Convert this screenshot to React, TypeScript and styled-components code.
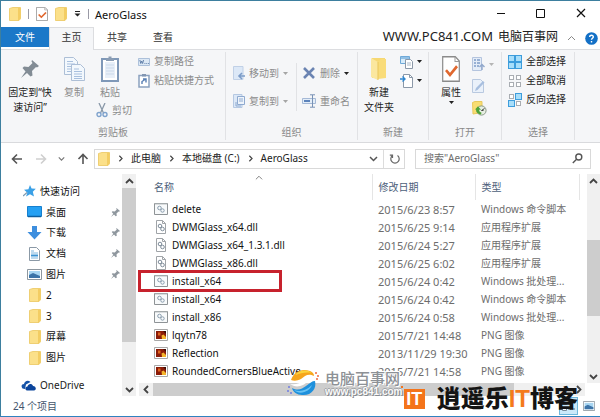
import React from "react";
import styled, { createGlobalStyle } from "styled-components";

const GlobalStyle = createGlobalStyle`
  *, *::before, *::after { box-sizing: border-box; }
  html, body { margin: 0; padding: 0; }
  body, button, input, table {
    font-family: "Noto Sans", "Noto Sans CJK SC", sans-serif;
    font-size: 10px;
    line-height: 15px;
  }
  button { margin: 0; padding: 0; border: 0; background: none; color: inherit; }
  svg { display: block; flex: none; }
`;

/* ---------- layout ---------- */

const Window = styled.div`
  position: relative;
  display: flex;
  flex-direction: column;
  min-height: 100vh;
  overflow: hidden;
  background: #fff;
  color: #222;
  border: solid #3d7f9f;
  border-width: 1px 0 1px 1px;
  border-bottom-color: #2f82c0;
  white-space: nowrap;
`;

const TitleBar = styled.header`
  display: flex;
  align-items: center;
  height: 26px;
  padding: 0 14px 0 8px;
`;

const QuickAccess = styled.div`
  display: flex;
  align-items: center;
  gap: 7px;
`;

const Divider = styled.span`
  width: 1px;
  height: 10px;
  background: #9a9aa6;
`;

const Title = styled.h1`
  margin: 0 0 0 6px;
  font-size: 11px;
  font-weight: 400;
  color: #111;
`;

const WindowControls = styled.div`
  display: flex;
  gap: 30px;
  margin-left: auto;
  padding-bottom: 2px;
`;

const IconButton = styled.button`
  display: flex;
  align-items: center;
  justify-content: center;
  gap: 4px;
`;

const TabBar = styled.nav`
  display: flex;
  align-items: stretch;
  height: 23px;
  border-bottom: 1px solid #dcdde0;
`;

const Tab = styled.button<{ $kind?: "file" | "active" }>`
  width: ${(p) => (p.$kind === "file" ? 48 : p.$kind === "active" ? 45 : 46)}px;
  height: ${(p) => (p.$kind === "file" ? 20 : 23)}px;
  padding-bottom: ${(p) => (p.$kind === "file" ? 0 : 3)}px;
  color: ${(p) => (p.$kind === "file" ? "#fff" : "#333")};
  background: ${(p) => (p.$kind === "file" ? "#1b78c8" : p.$kind === "active" ? "#f5f6f8" : "transparent")};
  border: ${(p) => (p.$kind === "active" ? "1px solid #dcdde0" : "0")};
  border-bottom: 0;
`;

const SiteMark = styled.div`
  display: flex;
  align-items: center;
  gap: 5px;
  margin: 0 9px 4px auto;
  font-size: 12px;
  color: #222;
`;

const SiteUrl = styled.span`
  font-size: 13px;
`;

const HelpTools = styled.div`
  display: flex;
  align-items: center;
  gap: 9px;
  padding-right: 2px;
`;

const Ribbon = styled.section`
  display: flex;
  height: 93px;
  padding: 2px 0 2px;
  background: #f5f6f8;
  border-bottom: 1px solid #d9dadd;
`;

const Group = styled.div<{ $width: number; $pad: number }>`
  display: flex;
  flex-direction: column;
  flex: 0 0 ${(p) => p.$width}px;
  padding-left: ${(p) => p.$pad}px;
  border-right: 1px solid #e1e2e5;
`;

const GroupBody = styled.div`
  display: flex;
  flex: 1;
`;

const GroupLabel = styled.div<{ $pad: number }>`
  height: 15px;
  margin-left: -${(p) => p.$pad}px;
  text-align: center;
  color: #8a8a8a;
`;

const BigButton = styled.button<{ $width: number; $off?: boolean }>`
  display: flex;
  flex-direction: column;
  align-items: center;
  align-self: flex-start;
  flex: none;
  gap: 3px;
  width: ${(p) => p.$width}px;
  padding-top: 4px;
  color: ${(p) => (p.$off ? "#8c8c8c" : "#222")};

  svg:first-child { height: 26px; }
  svg:not(:first-child) { margin-top: -2px; }
`;

const Column = styled.div<{ $width?: number; $top?: number }>`
  display: flex;
  flex-direction: column;
  flex: none;
  width: ${(p) => (p.$width ? p.$width + "px" : "auto")};
  padding-top: ${(p) => p.$top ?? 0}px;
`;

const SmallButton = styled.button<{ $height: number; $off?: boolean }>`
  display: flex;
  align-items: center;
  gap: 4px;
  height: ${(p) => p.$height}px;
  color: ${(p) => (p.$off ? "#8c8c8c" : "#222")};
`;

const InnerRule = styled.span`
  width: 1px;
  height: 48px;
  margin: 11px 5px 0 8px;
  background: #e1e2e5;
`;

const NavRow = styled.div`
  display: flex;
  align-items: center;
  height: 31px;
  padding: 0 9px 0 10px;
`;

const NavButtons = styled.div`
  display: flex;
  align-items: center;
  justify-content: space-between;
  width: 78px;
  margin-right: 5px;
`;

const AddressBar = styled.div`
  display: flex;
  align-items: center;
  flex: 1;
  gap: 7px;
  height: 20px;
  padding-left: 3px;
  border: 1px solid #d9d9d9;
`;

const Crumb = styled.button`
  color: #222;
`;

const AddressEnd = styled.div`
  display: flex;
  align-items: center;
  gap: 5px;
  height: 100%;
  margin-left: auto;
  padding-right: 3px;
`;

const AddressRule = styled.span`
  width: 1px;
  height: 100%;
  background: #dcdcdc;
`;

const SearchBox = styled.label`
  display: flex;
  align-items: center;
  flex: 0 0 174px;
  height: 20px;
  margin-left: 10px;
  padding: 0 7px 0 8px;
  border: 1px solid #d9d9d9;

  input {
    flex: 1;
    min-width: 0;
    padding: 0;
    border: 0;
    outline: 0;
    background: none;
  }
  input::placeholder { color: #6e6e6e; opacity: 1; }
`;

const Body = styled.div`
  display: flex;
  flex: 1;
  gap: 3px;
`;

const Sidebar = styled.aside`
  display: flex;
  flex: 0 0 135px;
`;

const Tree = styled.div`
  display: flex;
  flex-direction: column;
  flex: 1;
  padding-top: 7px;
`;

const TreeList = styled.ul`
  display: flex;
  flex-direction: column;
  flex: 1;
  margin: 0;
  padding: 0;
  list-style: none;
`;

const TreeItem = styled.li<{ $root?: boolean }>`
  display: flex;
  align-items: center;
  flex: 1;
  gap: 4px;
  padding: 0 2px 0 ${(p) => (p.$root ? 22 : 26)}px;
  color: #111;

  .pin { margin-left: auto; }
`;

const TreeIcon = styled.span`
  display: flex;
  justify-content: center;
  width: 15px;
`;

const DriveItem = styled.div`
  display: flex;
  align-items: center;
  gap: 4px;
  height: 20px;
  margin: 7px 0 1px;
  padding-left: 20px;
`;

const VScroll = styled.div<{ $width: number }>`
  display: flex;
  flex-direction: column;
  flex: 0 0 ${(p) => p.$width}px;
  background: #f0f0f0;
`;

const ScrollButton = styled.button`
  display: flex;
  align-items: center;
  justify-content: center;
  flex: 0 0 14px;
`;

const Track = styled.div<{ $before: number; $thumb: number; $after: number }>`
  flex: 1;
  display: grid;
  grid-template-rows: ${(p) => `${p.$before}fr ${p.$thumb}fr ${p.$after}fr`};

  &::after {
    content: "";
    grid-row: 2;
    background: #cdcdcd;
  }
`;

const HTrack = styled.div`
  flex: 1;
  display: grid;
  grid-template-columns: 363fr 57fr;

  &::after {
    content: "";
    grid-column: 1;
    background: #cdcdcd;
  }
`;

const HScroll = styled.div`
  display: flex;
  height: 13px;
  margin-right: 15px;
  background: #f0f0f0;
`;

const Main = styled.main`
  display: flex;
  flex-direction: column;
  flex: 1;
  min-width: 0;
`;

const ListArea = styled.div`
  display: flex;
  flex: 1;
`;

const FileTable = styled.table`
  flex: 1;
  align-self: flex-start;
  width: 0;
  table-layout: fixed;
  border-collapse: collapse;

  th, td { padding: 0 0 0 6px; text-align: left; font-weight: 400; }
  th:first-child, td:first-child { padding-left: 15px; }
  th { position: relative; height: 26px; color: #4c607a; border-right: 1px solid #e5e5e5; }
  th:last-child { border-right: 0; }
  td { height: 18px; color: #6d6d6d; }
  td:first-child { color: #111; }
  td:nth-child(2) { font-size: 11px; }
`;

const SortMark = styled.span`
  position: absolute;
  top: 0;
  left: 50%;
`;

const FileCell = styled.div`
  position: relative;
  display: flex;
  align-items: center;
  gap: 4px;
  height: 18px;
`;

const RedFrame = styled.span`
  position: absolute;
  top: -2px;
  left: -16px;
  width: 144px;
  height: 22px;
  border: 3px solid #c7222d;
`;

const StatusBar = styled.footer`
  display: flex;
  align-items: center;
  height: 20px;
  padding: 0 5px 0 12px;
  color: #44546c;
`;

const ViewButtons = styled.div`
  display: flex;
  align-items: center;
  gap: 4px;
  margin-left: auto;
`;

const ViewButton = styled.button<{ $on?: boolean }>`
  display: flex;
  align-items: center;
  justify-content: center;
  width: ${(p) => (p.$on ? 19 : 13)}px;
  height: 18px;
  background: ${(p) => (p.$on ? "#cbe8f9" : "none")};
  border: ${(p) => (p.$on ? "1px solid #6fb7dc" : "0")};
`;

const SiteLogo = styled.div`
  position: absolute;
  left: 286px;
  bottom: 19px;
  display: flex;
  align-items: center;
  gap: 5px;
`;

const SiteLogoText = styled.div`
  display: flex;
  flex-direction: column;
  color: #8d9196;
  text-shadow: 1px 1px 0 #fff, -1px -1px 0 #fff, 1px -1px 0 #fff;

  strong { font-size: 15px; line-height: 16px; font-weight: 500; }
  em {
    font: 700 10px/11px "Liberation Sans", sans-serif;
    color: #fafafa;
    text-shadow: 1px 1px 0 #85898e, -1px 0 0 #a0a4a8, 0 -1px 0 #a0a4a8;
  }
`;

const BlogMark = styled.div`
  position: absolute;
  right: 22px;
  bottom: 5px;
  display: flex;
  align-items: center;
  gap: 12px;
  font-size: 24px;
  line-height: 24px;
  font-weight: 900;
  color: #141414;

  b { color: #f47a1c; font-family: "Liberation Sans", sans-serif; font-weight: 700; }
`;

const BlogBadge = styled.span`
  position: relative;
  display: flex;
  align-items: center;
  justify-content: center;
  width: 21px;
  height: 20px;
  background: #f4741a;
  color: #fff;
  font: 700 18px/20px "Liberation Sans", sans-serif;

  &::before {
    content: "";
    position: absolute;
    top: -3px;
    left: -3px;
    width: 2px;
    height: 2px;
    background: #f4741a;
  }
`;

/* ---------- icons ---------- */

const Folder = ({ w = 12, h = 14 }: { w?: number; h?: number }) => (
  <svg width={w} height={h} viewBox="0 0 12 14" preserveAspectRatio="none">
    <path d="M.5 1.500 4 .5h7.500v11l-1.500 2H.5z" fill="#fbe08a" stroke="#efcf73" />
    <path d="M9 1v12.500l2.500-1.500V1z" fill="#f3cd63" />
  </svg>
);

const BigFolder = () => (
  <svg width="18" height="26" viewBox="0 0 18 26">
    <path d="M2 2h13v20H2z" fill="#f6d873" />
    <path d="M1 2l7 4v18l-7-3z" fill="#fbe79f" />
    <path d="M8 6l3-3h5v19l-8 1z" fill="#f9dc7a" />
    <path d="M8 6v18" stroke="#e9c558" />
  </svg>
);

const CheckDoc = ({ w = 12, h = 14 }: { w?: number; h?: number }) => (
  <svg width={w} height={h} viewBox="0 0 18 24" preserveAspectRatio="none">
    <path d="M.7.7h12.600l4 4v18.600H.7z" fill="#fff" stroke="#8a8a8a" strokeWidth="1.200" />
    <path d="M13 1v4h4" fill="none" stroke="#9a9a9a" />
    <path d="M4 13l4 4.500 7-8" fill="none" stroke="#e0682f" strokeWidth="2.600" />
  </svg>
);

const Caret = ({ color = "#222" }: { color?: string }) => (
  <svg width="5" height="3" viewBox="0 0 5 3"><path d="M0 0h5L2.500 3z" fill={color} /></svg>
);

const CustomizeCaret = () => (
  <svg width="7" height="6" viewBox="0 0 7 6"><path d="M1 0h5v1H1zM.5 2.500h6l-3 3z" fill="#222" /></svg>
);

const Chevron = ({ dir, size = 7, color = "#444", weight = 1.5 }: { dir: "up" | "down" | "left" | "right"; size?: number; color?: string; weight?: number }) => {
  const d = { up: "M1 6l3.500-3.500L8 6", down: "M1 3l3.500 3.500L8 3", left: "M6 1L2.500 4.500 6 8", right: "M3 1l3.500 3.500L3 8" }[dir];
  return (
    <svg width={size} height={size} viewBox="0 0 9 9"><path d={d} fill="none" stroke={color} strokeWidth={weight} /></svg>
  );
};

const Arrow = ({ dir, color }: { dir: "left" | "right" | "up"; color: string }) => {
  const d = { left: "M11 6H1.500M6 1.500L1.500 6 6 10.500", right: "M1 6h9.500M6 1.500L10.500 6 6 10.500", up: "M6 11V1.500M1.500 6L6 1.500 10.500 6" }[dir];
  return (
    <svg width="12" height="12" viewBox="0 0 12 12"><path d={d} fill="none" stroke={color} strokeWidth="1.600" /></svg>
  );
};

const Pin = ({ size = 10, color = "#8f979e" }: { size?: number; color?: string }) => (
  <svg className="pin" width={size} height={size} viewBox="0 0 18 18">
    <path d="M11 0l7 6-2 1.500-1-.5-4 4 .500 4.500-2 1L6 13 0 18l4.500-6.500L1.500 8l1.500-1.500 4.500.5 4-4-1-1.500z" fill={color} />
  </svg>
);

const CopyPages = () => (
  <svg width="23" height="26" viewBox="0 0 23 26">
    <g fill="#f3f8fd" stroke="#adbfd6">
      <path d="M1.500 1.500h9l4 4v13h-13z" />
      <path d="M8.500 8.500h9l4 4v12h-13z" />
    </g>
    <path d="M4 5.500h6M4 8h8M4 10.500h4M4 13h4M4 15.500h4M11 13h5M11 15.500h8M11 18h8M11 20.500h8M11 22.500h8" stroke="#a9c0de" />
  </svg>
);

const Clipboard = () => (
  <svg width="18" height="26" viewBox="0 0 18 26">
    <path d="M1 3h16v22H1z" fill="#fff" stroke="#7f98b8" strokeWidth="2" />
    <path d="M4 6h10v16H4z" fill="#e8eff8" />
    <path d="M5 5V2.500h2.500V.5h3v2H13V5z" fill="#8b9db4" />
    <path d="M5 9h8M5 12h8M5 15h8M5 18h8" stroke="#cbd9ea" />
  </svg>
);

const Scissors = () => (
  <svg width="12" height="15" viewBox="0 0 12 15" fill="none">
    <path d="M3 0l4.500 10M9 0L4.500 10" stroke="#8998a8" strokeWidth="1.300" />
    <circle cx="3" cy="11.500" r="2" stroke="#7fa3cd" strokeWidth="1.400" />
    <circle cx="9" cy="11.500" r="2" stroke="#7fa3cd" strokeWidth="1.400" />
  </svg>
);

const PathIcon = () => (
  <svg width="12" height="8" viewBox="0 0 13 8" preserveAspectRatio="none">
    <path d="M.5.5h12v7H.5z" fill="#dce8f5" stroke="#a9bdd8" />
    <path d="M2 2l1 3.500L4 3l1 2.500L6 2M7 5.500h1M9 5.500h1M11 5.500h1" fill="none" stroke="#5f7ea8" />
  </svg>
);

const ShortcutIcon = () => (
  <svg width="12" height="14" viewBox="0 0 12 14">
    <path d="M1 1.500h10v11.500H1z" fill="#fff" stroke="#8ba1bf" strokeWidth="1.500" />
    <path d="M4 0h4v2.500H4z" fill="#8296b2" />
    <path d="M4 10V7.500l3-2M5 5h3v3.500" fill="none" stroke="#587fb4" strokeWidth="1.400" />
  </svg>
);

const MoveTo = () => (
  <svg width="12" height="14" viewBox="0 0 12 14">
    <path d="M.5.5H10v13H.5z" fill="#dce8f7" stroke="#c0d0e6" />
    <path d="M12 10H6.500M9 7L6 10l3 3" stroke="#7c9cc8" strokeWidth="1.600" fill="none" />
  </svg>
);

const CopyTo = () => (
  <svg width="12" height="14" viewBox="0 0 12 14">
    <path d="M.5.5H9v13H.5z" fill="#dce8f7" stroke="#b5c8e2" />
    <path d="M4.500 2.500h7v8h-7z" fill="#eef4fb" stroke="#8faad0" />
    <path d="M6 5h4M6 7h4M3 8v4h5" stroke="#8faad0" fill="none" />
  </svg>
);

const DeleteX = () => (
  <svg width="14" height="12" viewBox="-1 0 14 12"><path d="M1 1l10 10M11 1L1 11" stroke="#6b84b2" strokeWidth="2.600" /></svg>
);

const Rename = () => (
  <svg width="14" height="14" viewBox="0 0 14 14" fill="none">
    <path d="M.5 4.500h13v5H.5z" fill="#e3edf8" stroke="#a5b9d6" />
    <path d="M2 7h6" stroke="#5c83bb" strokeWidth="2" />
    <path d="M10.500 1v12M8 .8h5M8 13.200h5" stroke="#7892b5" />
  </svg>
);

const NewItem = () => (
  <svg width="13" height="14" viewBox="0 0 13 14">
    <path d="M.5 1.500h9v7h-9z" fill="#d7ecfb" stroke="#6ea9d8" />
    <path d="M1 3h8" stroke="#4d94cf" />
    <path d="M5.500 4.500h5l2 2v7h-7z" fill="#fff" stroke="#8b98a8" />
    <path d="M7 8h4M7 10h4" stroke="#a9b7c6" />
  </svg>
);

const EasyAccess = () => (
  <svg width="13" height="14" viewBox="0 0 13 14">
    <path d="M3.500.5h6l3 3v10h-9z" fill="#fff" stroke="#8b98a8" />
    <path d="M9.500.5v3h3" fill="none" stroke="#8b98a8" />
    <path d="M0 5h5M2.500 2.500L5 5 2.500 7.500" fill="none" stroke="#2f86cf" strokeWidth="1.400" />
  </svg>
);

const OpenIcon = () => (
  <svg width="13" height="14" viewBox="0 0 13 14">
    <path d="M.5.5h9v13h-9z" fill="#e3ecf8" stroke="#b4c4de" />
    <path d="M2 3h2M5 3h3M2 6h2M5 6h3M2 9h2M5 9h2" stroke="#7f9cc7" strokeWidth="1.500" />
    <path d="M10 13V8M7.500 10L10 7.500l2.500 2.500" fill="none" stroke="#91a8cc" strokeWidth="1.400" />
  </svg>
);

const EditIcon = () => (
  <svg width="13" height="14" viewBox="0 0 13 14">
    <path d="M.5.5h8l3 3v10H.5z" fill="#eaf1fa" stroke="#b9c9e0" />
    <path d="M3 12l1-3 7-7 1.500 1.500-7 7.500z" fill="#a8bfdf" />
  </svg>
);

const HistoryIcon = () => (
  <svg width="15" height="15" viewBox="0 0 15 15">
    <path d="M.5 1.500L3 .5h7v11l-9 1.500z" fill="#f8dd72" stroke="#e8c95c" />
    <circle cx="9.500" cy="9.500" r="4.600" fill="#e6eee2" stroke="#8a9a88" />
    <path d="M4 8.500a5 5 0 0 0 5 5l.5-1.800a3.500 3.500 0 0 1-2.500-3l2 0-3-3.500-3 3.300z" fill="#4ea339" />
    <path d="M9.500 9.500l3-2M9.500 9.500h2" stroke="#444" />
  </svg>
);

const SelectGrid = ({ on }: { on: number[] }) => (
  <svg width="14" height="14" viewBox="0 0 14 14">
    {[0, 1, 2, 3].map((i) => {
      const lit = on.includes(i);
      const x = (i % 2) * 7;
      const y = Math.floor(i / 2) * 7;
      return lit ? (
        <rect key={i} x={x + 0.5} y={y + 0.5} width="6" height="6" fill="#a8defa" stroke="#3d9ddc" />
      ) : (
        <rect key={i} x={x + 1.5} y={y + 1.5} width="4" height="4" fill="#fff" stroke="#a9adb2" />
      );
    })}
  </svg>
);

const Star = () => (
  <svg width="13" height="12" viewBox="0 0 13 12">
    <path d="M7 0l1.600 3.600 4.200.2-3 3 1.200 4.700-4-2.200L3 11.500l1.400-3.800L1 4.800l4.400-.6z" fill="#3ba0e6" />
    <path d="M0 11l4-3.500" stroke="#7d99b0" strokeWidth="1.200" />
  </svg>
);

const Desktop = () => (
  <svg width="15" height="12" viewBox="0 0 15 12">
    <path d="M.5.5h14v10H.5z" fill="#25a0f3" stroke="#1680cf" />
    <path d="M1 10.500h13" stroke="#0d5e9f" strokeWidth="1.500" />
  </svg>
);

const Download = () => (
  <svg width="15" height="14" viewBox="0 0 15 14">
    <path d="M5 0h5v6h4.500l-7 7.500L.5 6H5z" fill="#3d8ede" />
  </svg>
);

const Documents = () => (
  <svg width="15" height="14" viewBox="0 0 15 14">
    <path d="M2.500.5h7l3 3v10h-10z" fill="#fff" stroke="#8b99a6" />
    <path d="M4 4h3M4 6h7M4 11h7" stroke="#7ab4de" />
    <path d="M4 7.500h7v2H4z" fill="#3b93d3" />
  </svg>
);

const Pictures = ({ w = 15, h = 11 }: { w?: number; h?: number }) => (
  <svg width={w} height={h} viewBox="0 0 15 11" preserveAspectRatio="none">
    <path d="M.5.5h14v10H.5z" fill="#fff" stroke="#8d979f" />
    <path d="M2 2h11v7H2z" fill="#a9d6f2" />
    <path d="M2 6l4-2 7 3v2H2z" fill="#3d74a8" />
  </svg>
);

const Cloud = () => (
  <svg width="15" height="11" viewBox="0 0 15 11">
    <path d="M1.500 8.500C-.5 6 1 4 3 4c.5-3 4-4.500 6.500-2L5 4.500 4 9z" fill="#1553a8" />
    <path d="M6 10.500C3.500 10 4 6.500 6.500 6.500c.5-3 4.500-3.500 5.500-.5 3 0 4 4 1 4.500z" fill="#0b459c" />
  </svg>
);

const ScriptIcon = () => (
  <svg width="14" height="12" viewBox="0 0 14 12">
    <path d="M.5.5h13v11H.5z" fill="#f8fafb" stroke="#8e9396" />
    <path d="M1 1h12" stroke="#b9bec1" />
    <g fill="none" stroke="#8a9daf">
      <circle cx="5.500" cy="5" r="1.800" />
      <circle cx="8.500" cy="7.500" r="1.700" />
    </g>
  </svg>
);

const DllIcon = () => (
  <svg width="14" height="14" viewBox="0 0 14 14">
    <path d="M2.500.5h6l3 3v10h-9z" fill="#fff" stroke="#a0a4a8" />
    <path d="M8.500.5v3h3" fill="none" stroke="#a0a4a8" />
    <g fill="none" stroke="#7f8d9a"><circle cx="6" cy="6" r="1.800" /><circle cx="8.500" cy="9" r="1.800" /></g>
  </svg>
);

const PngIcon = () => (
  <svg width="14" height="12" viewBox="0 0 14 12">
    <path d="M.5.5h13v11H.5z" fill="#fff" stroke="#a8a8a8" />
    <path d="M2 2h10v8H2z" fill="#8c1c08" />
    <path d="M4 3.500h2.500v3H4z" fill="#e0661f" />
    <path d="M7.500 6.500l2-1L12 8v2H8z" fill="#f5b52c" />
    <path d="M9 2h3v3z" fill="#3a0b04" />
  </svg>
);

const Refresh = () => (
  <svg width="12" height="12" viewBox="0 0 12 12" fill="none" stroke="#666" strokeWidth="1.200">
    <path d="M8.500 2.500a4.200 4.200 0 1 1-5 0M3.500 5V2.200H.8" />
  </svg>
);

const Magnifier = () => (
  <svg width="11" height="11" viewBox="0 0 11 11" fill="none" stroke="#555" strokeWidth="1.400">
    <circle cx="6.800" cy="4" r="3" /><path d="M4.600 6.200L.8 10" />
  </svg>
);

const Help = () => (
  <svg width="13" height="13" viewBox="0 0 13 13">
    <circle cx="6.500" cy="6.500" r="6.300" fill="#1370c6" />
    <path d="M4.700 5c0-2.500 3.800-2.300 3.600 0-.1 1.300-1.800 1.300-1.800 2.800M6.500 9v1.500" fill="none" stroke="#fff" strokeWidth="1.400" />
  </svg>
);

const DetailsView = () => (
  <svg width="14" height="12" viewBox="0 0 14 12">
    <path d="M.5 1.500h4v3h-4zM.5 7.500h4v3h-4z" fill="#fff" stroke="#7b8d9c" />
    <path d="M6 3h3M10 3h3M6 9h3M10 9h3" stroke="#55697a" />
  </svg>
);

const Swirl = () => (
  <svg width="33" height="28" viewBox="0 0 33 28">
    <path d="M4 11C7 2 15-1 23 2c3 1 4 3 4 5-6-3-9 0-13 3-4 2-7 2-10 1z" fill="#f6a51c" />
    <path d="M8 6c4-5 12-6 17-2-6-1-11 0-17 2z" fill="#fbd43d" />
    <path d="M28 12c2 8-4 15-13 14-5 0-9-3-10-7 6 3 10 1 14-2 4-3 6-5 9-5z" fill="#1e90dc" />
    <path d="M3 15c6 1 10-1 14-3s7-3 10-2c-5 1-7 4-11 6s-9 2-13-1z" fill="#fff" />
    <path d="M7 21c6 2 12 1 18-5-2 6-12 11-18 5z" fill="#69c3f4" />
    <g fill="#f0693a"><circle cx="29" cy="4" r="1" /><circle cx="31" cy="7" r="1" /><circle cx="30" cy="10" r="1" /></g>
    <g fill="#6f7de0"><circle cx="2" cy="18" r="1" /><circle cx="1" cy="22" r="1" /><circle cx="4" cy="24" r="1" /></g>
  </svg>
);

/* ---------- data ---------- */

const tree = [
  { icon: <Desktop />, name: "桌面", pinned: true },
  { icon: <Download />, name: "下载", pinned: true },
  { icon: <Documents />, name: "文档", pinned: true },
  { icon: <Pictures />, name: "图片", pinned: true },
  { icon: <Folder />, name: "2" },
  { icon: <Folder />, name: "3" },
  { icon: <Folder />, name: "屏幕" },
  { icon: <Folder />, name: "图片" },
];

type Kind = "script" | "dll" | "png";

const files: { kind: Kind; name: string; date: string; type: string; marked?: boolean }[] = [
  { kind: "script", name: "delete", date: "2015/6/23 8:57", type: "Windows 命令脚本" },
  { kind: "dll", name: "DWMGlass_x64.dll", date: "2015/6/25 9:14", type: "应用程序扩展" },
  { kind: "dll", name: "DWMGlass_x64_1.3.1.dll", date: "2015/6/24 5:27", type: "应用程序扩展" },
  { kind: "dll", name: "DWMGlass_x86.dll", date: "2015/6/25 6:02", type: "应用程序扩展" },
  { kind: "script", name: "install_x64", date: "2015/6/24 0:42", type: "Windows 批处理...", marked: true },
  { kind: "script", name: "install_x64", date: "2015/6/24 0:42", type: "Windows 命令脚本" },
  { kind: "script", name: "install_x86", date: "2015/6/24 0:58", type: "Windows 批处理..." },
  { kind: "png", name: "lqytn78", date: "2015/7/21 14:48", type: "PNG 图像" },
  { kind: "png", name: "Reflection", date: "2013/11/29 19:30", type: "PNG 图像" },
  { kind: "png", name: "RoundedCornersBlueActive", date: "2015/7/21 14:58", type: "PNG 图像" },
];

const fileIcon: Record<Kind, React.ReactNode> = {
  script: <ScriptIcon />,
  dll: <DllIcon />,
  png: <PngIcon />,
};

/* ---------- page ---------- */

const RibbonGroup = ({ width, pad, label, children }: { width: number; pad: number; label: string; children: React.ReactNode }) => (
  <Group $width={width} $pad={pad}>
    <GroupBody>{children}</GroupBody>
    <GroupLabel $pad={pad}>{label}</GroupLabel>
  </Group>
);

export default function App() {
  return (
    <>
      <GlobalStyle />
      <Window>
        <TitleBar>
          <QuickAccess>
            <Folder />
            <Divider />
            <IconButton aria-label="属性"><CheckDoc /></IconButton>
            <IconButton aria-label="新建文件夹"><Folder /></IconButton>
            <IconButton aria-label="自定义快速访问工具栏"><CustomizeCaret /></IconButton>
            <Divider />
          </QuickAccess>
          <Title>AeroGlass</Title>
          <WindowControls>
            <IconButton aria-label="最小化">
              <svg width="10" height="10" viewBox="0 0 10 10"><path d="M1 5.500h8" stroke="#111" /></svg>
            </IconButton>
            <IconButton aria-label="最大化">
              <svg width="10" height="10" viewBox="0 0 10 10"><path d="M.5 1.500h8v8h-8z" fill="none" stroke="#111" /></svg>
            </IconButton>
            <IconButton aria-label="关闭">
              <svg width="10" height="10" viewBox="0 0 10 10"><path d="M1 1l8 8M9 1L1 9" stroke="#111" strokeWidth="1.200" /></svg>
            </IconButton>
          </WindowControls>
        </TitleBar>

        <TabBar>
          <Tab $kind="file">文件</Tab>
          <Tab $kind="active">主页</Tab>
          <Tab>共享</Tab>
          <Tab>查看</Tab>
          <SiteMark><SiteUrl>WWW.PC841.COM</SiteUrl>电脑百事网</SiteMark>
          <HelpTools>
            <IconButton aria-label="最小化功能区"><Chevron dir="up" size={9} color="#888" weight={1} /></IconButton>
            <IconButton aria-label="帮助"><Help /></IconButton>
          </HelpTools>
        </TabBar>

        <Ribbon>
          <RibbonGroup width={225} pad={3} label="剪贴板">
            <BigButton $width={52}><Pin size={18} color="#828c95" /><span>固定到“快<br />速访问”</span></BigButton>
            <BigButton $width={36} $off><CopyPages />复制</BigButton>
            <Column $width={46}>
              <BigButton $width={36} $off><Clipboard />粘贴</BigButton>
              <SmallButton $height={20} $off><span /><Scissors />剪切</SmallButton>
            </Column>
            <Column>
              <SmallButton $height={19} $off><PathIcon />复制路径</SmallButton>
              <SmallButton $height={19} $off><ShortcutIcon />粘贴快捷方式</SmallButton>
            </Column>
          </RibbonGroup>
          <RibbonGroup width={132} pad={7} label="组织">
            <Column $top={7}>
              <SmallButton $height={28} $off><MoveTo />移动到<Caret color="#a5a5a5" /></SmallButton>
              <SmallButton $height={28} $off><CopyTo />复制到<Caret color="#a5a5a5" /></SmallButton>
            </Column>
            <InnerRule />
            <Column $top={7}>
              <SmallButton $height={28} $off><DeleteX />删除<Caret /></SmallButton>
              <SmallButton $height={28} $off><Rename />重命名</SmallButton>
            </Column>
          </RibbonGroup>
          <RibbonGroup width={71} pad={0} label="新建">
            <BigButton $width={42}><BigFolder /><span>新建<br />文件夹</span></BigButton>
            <Column>
              <SmallButton $height={19} aria-label="新建项目"><NewItem /><Caret /></SmallButton>
              <SmallButton $height={19} aria-label="轻松访问"><EasyAccess /><Caret /></SmallButton>
            </Column>
          </RibbonGroup>
          <RibbonGroup width={73} pad={1} label="打开">
            <BigButton $width={42}><CheckDoc w={18} h={24} /><span>属性</span><Caret /></BigButton>
            <Column $top={1}>
              <SmallButton $height={22} $off aria-label="打开"><OpenIcon /><Caret color="#b5b5b5" /></SmallButton>
              <SmallButton $height={22} $off aria-label="编辑"><EditIcon /></SmallButton>
              <SmallButton $height={22} aria-label="历史记录"><HistoryIcon /></SmallButton>
            </Column>
          </RibbonGroup>
          <RibbonGroup width={73} pad={6} label="选择">
            <Column>
              <SmallButton $height={19}><SelectGrid on={[0, 1, 2, 3]} />全部选择</SmallButton>
              <SmallButton $height={19}><SelectGrid on={[]} />全部取消</SmallButton>
              <SmallButton $height={19}><SelectGrid on={[1, 2]} />反向选择</SmallButton>
            </Column>
          </RibbonGroup>
        </Ribbon>

        <NavRow>
          <NavButtons>
            <IconButton aria-label="后退"><Arrow dir="left" color="#555" /></IconButton>
            <IconButton aria-label="前进"><Arrow dir="right" color="#cfcfcf" /></IconButton>
            <IconButton aria-label="最近浏览的位置"><Chevron dir="down" color="#777" /></IconButton>
            <IconButton aria-label="上移"><Arrow dir="up" color="#555" /></IconButton>
          </NavButtons>
          <AddressBar>
            <Folder />
            <Chevron dir="right" />
            <Crumb>此电脑</Crumb>
            <Chevron dir="right" />
            <Crumb>本地磁盘 (C:)</Crumb>
            <Chevron dir="right" />
            <Crumb>AeroGlass</Crumb>
            <AddressEnd>
              <IconButton aria-label="以前的位置"><Chevron dir="down" size={9} color="#555" /></IconButton>
              <AddressRule />
              <IconButton aria-label="刷新"><Refresh /></IconButton>
            </AddressEnd>
          </AddressBar>
          <SearchBox>
            <input type="text" aria-label="搜索" placeholder={'搜索"AeroGlass"'} />
            <Magnifier />
          </SearchBox>
        </NavRow>

        <Body>
          <Sidebar>
            <Tree>
              <TreeList>
                <TreeItem $root><Star />快速访问</TreeItem>
                {tree.map((t, i) => (
                  <TreeItem key={i}><TreeIcon>{t.icon}</TreeIcon>{t.name}{t.pinned && <Pin size={9} />}</TreeItem>
                ))}
              </TreeList>
              <DriveItem><Cloud />OneDrive</DriveItem>
            </Tree>
            <VScroll $width={14}>
              <ScrollButton aria-label="向上滚动"><Chevron dir="up" size={9} weight={1.8} /></ScrollButton>
              <Track $before={0} $thumb={152} $after={40} />
              <ScrollButton aria-label="向下滚动"><Chevron dir="down" size={9} weight={1.8} /></ScrollButton>
            </VScroll>
          </Sidebar>

          <Main>
            <ListArea>
              <FileTable>
                <colgroup>
                  <col />
                  <col width="103" />
                  <col width="104" />
                  <col width="8" />
                </colgroup>
                <thead>
                  <tr>
                    <th>名称<SortMark><Chevron dir="up" size={8} color="#777" weight={1} /></SortMark></th>
                    <th>修改日期</th>
                    <th>类型</th>
                    <th />
                  </tr>
                </thead>
                <tbody>
                  {files.map((f, i) => (
                    <tr key={i}>
                      <td><FileCell>{fileIcon[f.kind]}{f.name}{f.marked && <RedFrame />}</FileCell></td>
                      <td>{f.date}</td>
                      <td>{f.type}</td>
                      <td />
                    </tr>
                  ))}
                </tbody>
              </FileTable>
              <VScroll $width={13}>
                <ScrollButton aria-label="向上滚动"><Chevron dir="up" size={9} weight={1.8} /></ScrollButton>
                <Track $before={51} $thumb={75} $after={52} />
                <ScrollButton aria-label="向下滚动"><Chevron dir="down" size={9} weight={1.8} /></ScrollButton>
              </VScroll>
            </ListArea>
            <HScroll>
              <ScrollButton aria-label="向左滚动"><Chevron dir="left" size={9} weight={1.8} /></ScrollButton>
              <HTrack />
              <ScrollButton aria-label="向右滚动"><Chevron dir="right" size={9} weight={1.8} /></ScrollButton>
            </HScroll>
          </Main>
        </Body>

        <StatusBar>
          24 个项目
          <ViewButtons>
            <ViewButton $on aria-label="详细信息"><DetailsView /></ViewButton>
            <ViewButton aria-label="大图标"><Pictures w={12} h={10} /></ViewButton>
          </ViewButtons>
        </StatusBar>

        <SiteLogo>
          <Swirl />
          <SiteLogoText><strong>电脑百事网</strong><em>www.pc841.com</em></SiteLogoText>
        </SiteLogo>
        <BlogMark>
          <BlogBadge>IT</BlogBadge>
          <span>逍遥乐<b>IT</b>博客</span>
        </BlogMark>
      </Window>
    </>
  );
}
